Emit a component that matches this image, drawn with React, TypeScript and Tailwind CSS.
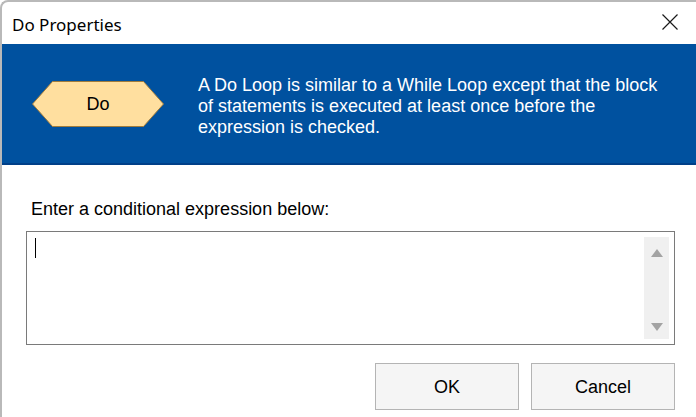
import React from "react";

export default function App() {
  return (
    <div className="w-[696px] h-[417px] overflow-hidden bg-white border-l-2 border-t-2 border-[#b9b9b9] rounded-tl-[8px] flex flex-col" style={{ fontFamily: '"Liberation Sans", Arial, sans-serif' }}>
      {/* title bar */}
      <div className="h-[42px] flex items-center justify-between pl-[10px] pr-[17px] shrink-0">
        <span className="text-[17px] text-black mt-[3px]" style={{ fontFamily: '"Noto Sans", "Open Sans", sans-serif' }}>Do Properties</span>
        <svg width="18" height="18" viewBox="0 0 18 18" className="mt-[-2px]">
          <path d="M1.5 1.5 L16.5 16.5 M16.5 1.5 L1.5 16.5" stroke="#1a1a1a" strokeWidth="1.2" fill="none" />
        </svg>
      </div>
      {/* blue header */}
      <div className="h-[121px] shrink-0 bg-[#00519f] border-b-2 border-[#003f88] flex items-start">
        <div className="ml-[30px] mt-[37px] relative w-[132px] h-[46px] flex items-center justify-center">
          <svg width="132" height="46" viewBox="0 0 132 46" className="absolute inset-0">
            <polygon points="0.5,23 20.5,0.5 111.5,0.5 131.5,23 111.5,45.5 20.5,45.5" fill="#ffdf9f" stroke="#a07c3c" strokeWidth="1" />
          </svg>
          <span className="relative text-[18px] text-black mt-[1px]">Do</span>
        </div>
        <p className="ml-[34px] mt-[31px] w-[470px] text-[18px] leading-[21px] text-white">
          A Do Loop is similar to a While Loop except that the block<br />of statements is executed at least once before the<br />expression is checked.
        </p>
      </div>
      {/* body */}
      <div className="flex flex-col pl-[24px] pr-[21px]">
        <div className="mt-[33px] ml-[5px] text-[18px] leading-[22px] text-black">Enter a conditional expression below:</div>
        <div className="mt-[11px] h-[114px] border border-[#7a7a7a] flex justify-between">
          <div className="ml-[8px] mt-[6px] w-px h-[20px] bg-black" />
          <div className="mt-[5px] mb-[5px] mr-[5px] w-[25px] bg-[#f0f0f0] flex flex-col items-center justify-between pt-[12px] pb-[8px]">
            <svg width="12" height="8" viewBox="0 0 12 8"><polygon points="6,0 12,8 0,8" fill="#a3a3a3" /></svg>
            <svg width="12" height="8" viewBox="0 0 12 8"><polygon points="0,0 12,0 6,8" fill="#a3a3a3" /></svg>
          </div>
        </div>
        <div className="mt-[18px] flex justify-end gap-[12px]">
          <button className="w-[144px] h-[47px] pt-[2px] bg-[#f5f5f5] border border-[#b4b4b4] text-[18px] text-black">OK</button>
          <button className="w-[144px] h-[47px] pt-[2px] bg-[#f5f5f5] border border-[#b4b4b4] text-[18px] text-black">Cancel</button>
        </div>
      </div>
    </div>
  );
}
